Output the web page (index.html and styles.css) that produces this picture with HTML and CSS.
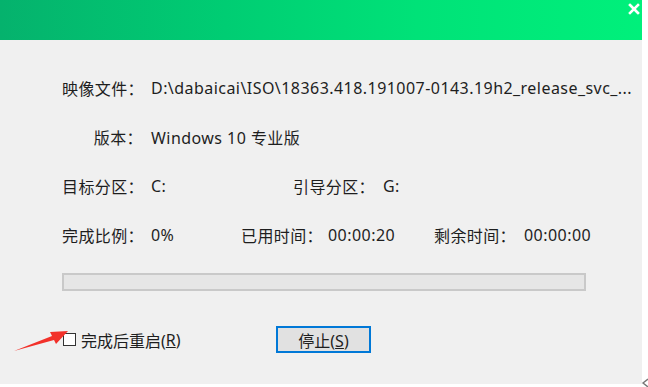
FILE: index.html
```html
<!DOCTYPE html>
<html lang="zh-CN">
<head>
  <meta charset="UTF-8" />
  <title>安装进度</title>
  <link rel="stylesheet" href="styles.css">
</head>
<body>
  <div class="window">
    <div class="titlebar">
      <svg class="close" width="12" height="12" viewBox="0 0 12 12">
        <path d="M2 2 L10 10 M10 2 L2 10" stroke="#fff" stroke-width="2.6" stroke-linecap="square"/>
      </svg>
    </div>

    <div class="content">
      <div class="row">
        <span class="label">映像文件：</span>
        <span class="value">D:\dabaicai\ISO\18363.418.191007-0143.19h2_release_svc_...</span>
      </div>
      <div class="row">
        <span class="label">版本：</span>
        <span class="value">Windows 10 专业版</span>
      </div>
      <div class="row">
        <span class="label">目标分区：</span>
        <span class="value w-c">C:</span>
        <span class="label l-boot">引导分区：</span>
        <span class="value">G:</span>
      </div>
      <div class="row row-last">
        <span class="label">完成比例：</span>
        <span class="value w-pct">0%</span>
        <span class="label l-used">已用时间：</span>
        <span class="value w-used">00:00:20</span>
        <span class="label l-boot">剩余时间：</span>
        <span class="value">00:00:00</span>
      </div>

      <div class="progress"><div class="progress-fill" style="width: 0%"></div></div>

      <div class="actions">
        <label class="check">
          <span class="box"></span>
          完成后重启(<u>R</u>)
        </label>
        <button class="btn" type="button">停止(<u>S</u>)</button>
      </div>
    </div>

    <!-- annotation arrow -->
    <svg class="arrow" width="60" height="30" viewBox="0 0 60 30">
      <path d="M2 26 L40 11 L38 7 L56 6 L44 19 L42 15 Z" fill="#f2312a"/>
    </svg>
  </div>

  <svg class="corner" width="8" height="10" viewBox="0 0 8 10">
    <path d="M7 1 L2 5 L7 9" stroke="#777" stroke-width="1.4" fill="none"/>
  </svg>
</body>
</html>
```

FILE: styles.css
```css
body {
  margin: 0;
  background: #fff;
  font-family: "Noto Sans", "Noto Sans CJK SC", sans-serif;
  color: #1e1e1e;
  position: relative;
  height: 387px;
  overflow: hidden;
}

.window {
  position: relative;
  width: 642px;
  height: 384px;
  background: #f0f0f0;
}

.titlebar {
  position: relative;
  height: 40px;
  background: linear-gradient(90deg, #05b26d 0%, #00cd73 35%, #00e278 65%, #00f07b 100%);
}

.close {
  position: absolute;
  right: 2px;
  top: 3px;
}

.content {
  padding: 36px 0 0 62px;
}

.row {
  display: flex;
  align-items: center;
  height: 24px;
  margin-bottom: 25px;
  font-size: 16px;
  white-space: nowrap;
}

.row-last {
  margin-top: 3px;
  margin-bottom: 26px;
}

.label {
  width: 89px;
  padding-right: 8px;
  box-sizing: border-box;
  text-align: right;
  letter-spacing: 0.4px;
}

.value {
  letter-spacing: 0.45px;
}

.w-c { width: 142px; }
.w-pct { width: 90px; }
.w-used { width: 106px; }
.l-boot { width: 90px; }
.l-used { width: 87px; }

.progress {
  width: 520px;
  height: 14px;
  border: 2px solid #c9c9c9;
  background: #e6e6e6;
}

.progress-fill {
  height: 100%;
  background: #06b025;
}

.actions {
  display: flex;
  align-items: center;
  margin-top: 35px;
}

.check {
  display: flex;
  align-items: center;
  width: 214px;
  font-size: 16px;
}

.box {
  width: 11px;
  height: 11px;
  border: 1.5px solid #333;
  background: #fff;
  margin: 0 5px 0 1px;
}

.btn {
  width: 95px;
  height: 27px;
  border: 2px solid #0078d7;
  background: #e1e1e1;
  font-family: inherit;
  font-size: 16px;
  color: #1e1e1e;
  padding: 0;
}

.arrow {
  position: absolute;
  left: 12px;
  top: 325px;
}

.corner {
  position: absolute;
  left: 641px;
  top: 378px;
}
```
